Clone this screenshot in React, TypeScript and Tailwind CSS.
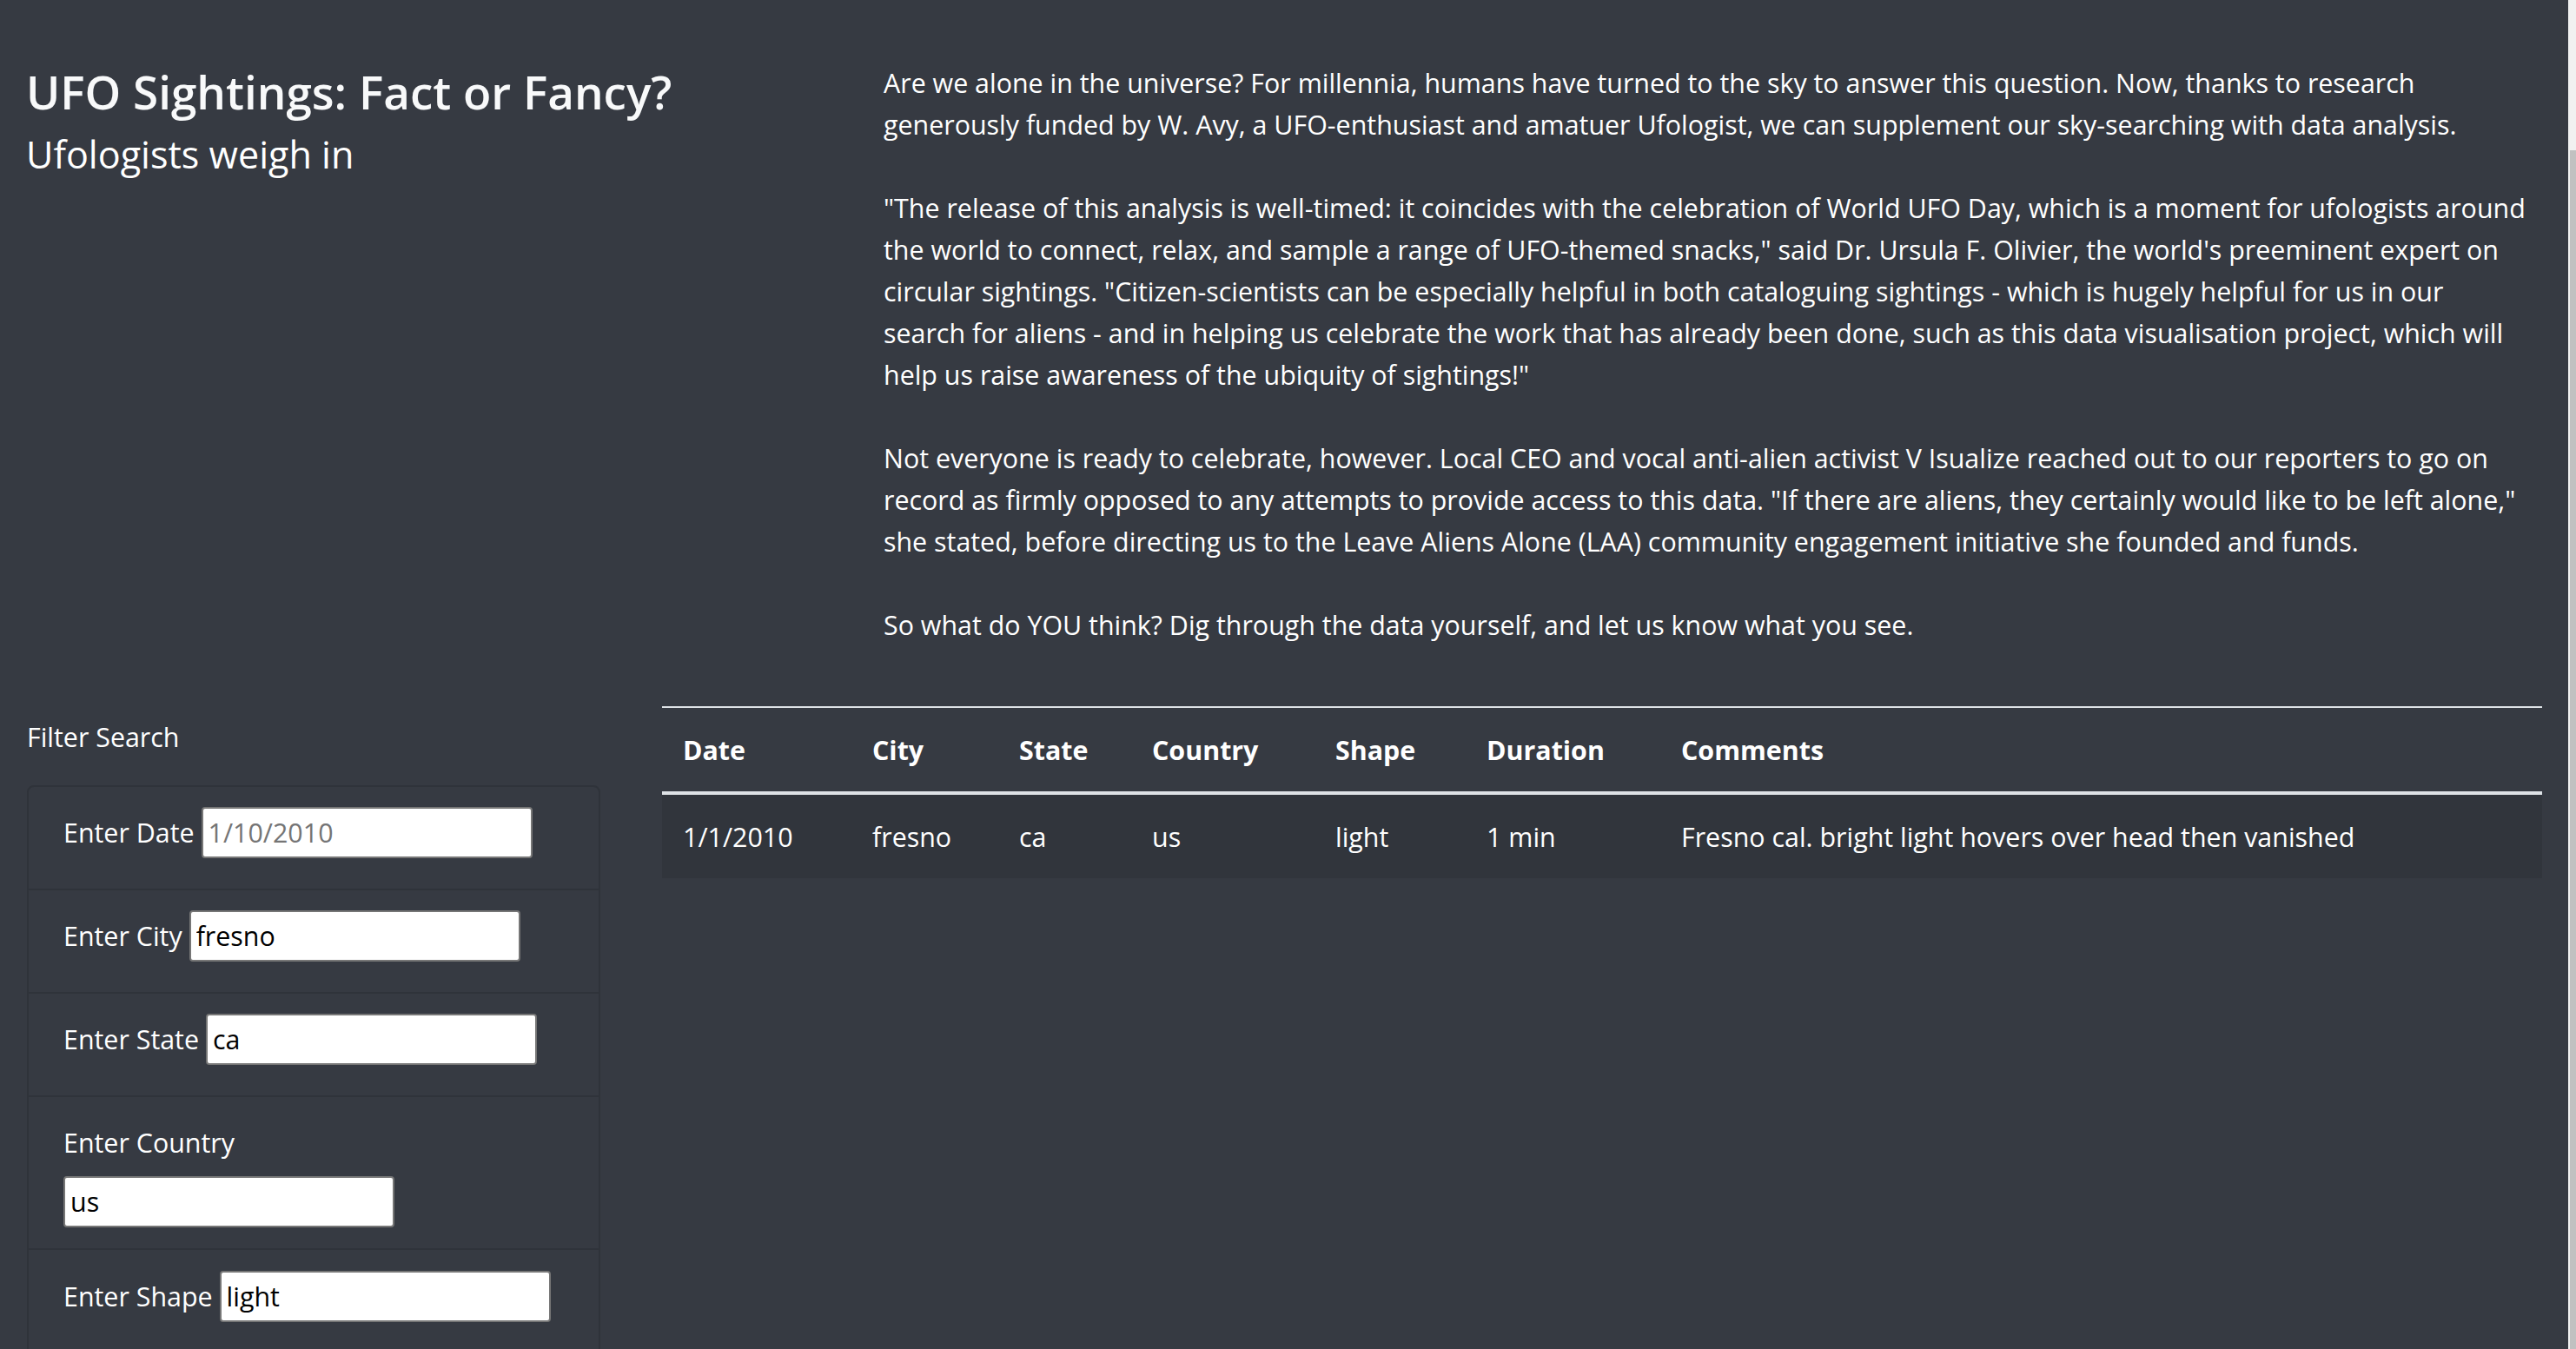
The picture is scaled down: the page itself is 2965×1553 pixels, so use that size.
import React from "react";

const paragraphs: string[][] = [
  [
    "Are we alone in the universe? For millennia, humans have turned to the sky to answer this question. Now, thanks to research",
    "generously funded by W. Avy, a UFO-enthusiast and amatuer Ufologist, we can supplement our sky-searching with data analysis.",
  ],
  [
    "\"The release of this analysis is well-timed: it coincides with the celebration of World UFO Day, which is a moment for ufologists around",
    "the world to connect, relax, and sample a range of UFO-themed snacks,\" said Dr. Ursula F. Olivier, the world's preeminent expert on",
    "circular sightings. \"Citizen-scientists can be especially helpful in both cataloguing sightings - which is hugely helpful for us in our",
    "search for aliens - and in helping us celebrate the work that has already been done, such as this data visualisation project, which will",
    "help us raise awareness of the ubiquity of sightings!\"",
  ],
  [
    "Not everyone is ready to celebrate, however. Local CEO and vocal anti-alien activist V Isualize reached out to our reporters to go on",
    "record as firmly opposed to any attempts to provide access to this data. \"If there are aliens, they certainly would like to be left alone,\"",
    "she stated, before directing us to the Leave Aliens Alone (LAA) community engagement initiative she founded and funds.",
  ],
  ["So what do YOU think? Dig through the data yourself, and let us know what you see."],
];

const inputCls =
  "w-[381px] h-[59px] shrink-0 bg-white text-black border-2 border-[#767676] rounded-[4px] px-[6px] text-[30.4px] font-['Open_Sans',sans-serif] outline-none placeholder:text-[#757575]";

function InlineItem({ label, value, placeholder }: { label: string; value?: string; placeholder?: string }) {
  return (
    <li className="h-[119px] px-[40px] pt-[23px] flex items-baseline gap-[8px] border-b-2 border-[#2f333a]">
      <label className="leading-[48px] whitespace-nowrap">{label}</label>
      <input className={inputCls} defaultValue={value} placeholder={placeholder} />
    </li>
  );
}

const columns = [
  { name: "Date", w: "w-[218px]" },
  { name: "City", w: "w-[169px]" },
  { name: "State", w: "w-[153px]" },
  { name: "Country", w: "w-[211px]" },
  { name: "Shape", w: "w-[174px]" },
  { name: "Duration", w: "w-[224px]" },
  { name: "Comments", w: "" },
];

const row = ["1/1/2010", "fresno", "ca", "us", "light", "1 min", "Fresno cal. bright light hovers over head then vanished"];

export default function App() {
  return (
    <div className="flex h-[1553px] w-full overflow-hidden bg-[#363a42] text-white font-['Open_Sans',sans-serif] text-[30.4px] leading-[48px]">
      <div className="flex-1 min-w-0 flex flex-col">
        {/* Top section */}
        <div className="h-[813px] shrink-0 flex pt-[70px]">
          <div className="w-[985px] shrink-0 pl-[30px] pr-[30px] pt-[4px]">
            <h3 className="text-[53px] leading-[1.2] font-semibold text-[#f8f9fa] whitespace-nowrap">UFO Sightings: Fact or Fancy?</h3>
            <h4 className="mt-[14px] text-[43.1px] leading-[1.2] font-normal text-white whitespace-nowrap">Ufologists weigh in</h4>
          </div>
          <div className="flex-1 min-w-0 pl-[32px] pr-[20px] pt-[2px] flex flex-col gap-[48px]">
            {paragraphs.map((p, i) => (
              <p key={i}>
                {p.map((line, j) => (
                  <span key={j} className="block whitespace-nowrap">
                    {line}
                  </span>
                ))}
              </p>
            ))}
          </div>
        </div>

        {/* Bottom section */}
        <div className="flex flex-1 min-h-0">
          <div className="w-[732px] shrink-0 pl-[31px] pr-[41px] pt-[12px]">
            <div className="leading-[48px]">Filter Search</div>
            <ul className="mt-[31px] border-2 border-[#2f333a] rounded-[8px]">
              <InlineItem label="Enter Date" placeholder="1/10/2010" />
              <InlineItem label="Enter City" value="fresno" />
              <InlineItem label="Enter State" value="ca" />
              <li className="h-[176px] px-[40px] pt-[29px] flex flex-col items-start border-b-2 border-[#2f333a]">
                <label className="leading-[48px] whitespace-nowrap">Enter Country</label>
                <input className={`${inputCls} mt-[14px]`} defaultValue="us" />
              </li>
              <li className="h-[119px] px-[40px] pt-[24px] flex items-baseline gap-[8px]">
                <label className="leading-[48px] whitespace-nowrap">Enter Shape</label>
                <input className={inputCls} defaultValue="light" />
              </li>
            </ul>
          </div>
          <div className="flex-1 min-w-0 pl-[30px] pr-[30px]">
            <table className="w-full table-fixed border-separate border-spacing-0">
              <thead>
                <tr>
                  {columns.map((c) => (
                    <th
                      key={c.name}
                      className={`${c.w} text-left font-bold px-[24px] pt-[25px] pb-[23px] leading-[48px] border-t-2 border-b-4 border-[#dee2e6]`}
                    >
                      {c.name}
                    </th>
                  ))}
                </tr>
              </thead>
              <tbody>
                <tr className="bg-[#31353c]">
                  {row.map((v, i) => (
                    <td key={i} className="px-[24px] pt-[25px] pb-[23px] leading-[48px] whitespace-nowrap">
                      {v}
                    </td>
                  ))}
                </tr>
              </tbody>
            </table>
          </div>
        </div>
      </div>

      {/* Scrollbar */}
      <div className="w-[9px] shrink-0 bg-[#f1f1f1] flex flex-col pt-[173px]">
        <div className="flex-1 ml-[2px] bg-[#c1c1c1]" />
      </div>
    </div>
  );
}
